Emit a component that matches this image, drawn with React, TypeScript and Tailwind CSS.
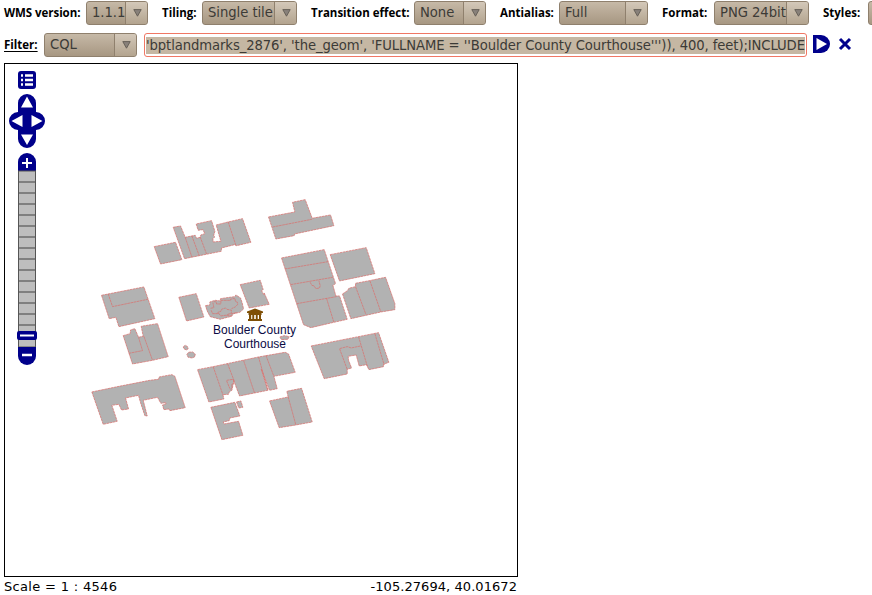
import React from 'react';

function Arrow() {
  return (
    <svg width="9" height="8" viewBox="0 0 9 8" className="block">
      <path d="M.8 .6H8.2L4.5 7.2Z" fill="#88817a" stroke="#615a52" strokeWidth="0.9" />
    </svg>
  );
}

function Select({ text, className }: { text: string; className: string }) {
  return (
    <div
      className={`flex h-[24px] shrink-0 overflow-hidden rounded-[3px] border border-[#8f806d] bg-gradient-to-b from-[#c6b9a7] to-[#a79782] ${className}`}
    >
      <div className="flex-1 pl-[5px] font-['DejaVu_Sans_Condensed','DejaVu_Sans',sans-serif] text-[14.67px] leading-[20px] tracking-[-0.05px] whitespace-nowrap text-[#3c3b37] [font-stretch:condensed]">
        {text}
      </div>
      <div className="flex w-[22px] shrink-0 items-center justify-center border-l border-[#8f806d] bg-gradient-to-b from-[#d3c8b9] to-[#b3a48f] pl-px">
        <Arrow />
      </div>
    </div>
  );
}

function Label({ text, className }: { text: string; className: string }) {
  return (
    <span
      className={`shrink-0 font-['Open_Sans','Noto_Sans',sans-serif] text-[11.5px] leading-[24px] font-bold whitespace-nowrap text-black ${className}`}
    >
      {text}
    </span>
  );
}

const northWest = [
  'M27 169L91 156L110 208L46 221Z',
  'M84 111L106 107L120 141L150 135L154 144L165 141L167 134L179 130L173 118L159 120L153 101L199 91L209 123L205 137L209 140L203 144L204 155L227 153L213 104L249 95L292 85L317 156L274 166L268 163L229 173L228 183L118 205Z',
  'M120 141L140 200M140 137L162 196M165 140L184 191M249 95L272 165',
  'M370 80L449 65L442 36L480 28L501 84L556 74L566 106L448 131L447 136L392 146Z',
  'M383 110L500 87',
];

const east = [
  'M34 53L162 28L196 130L188 135L197 167L208 167L231 237L191 246L122 262L100 253Z',
  'M44 86L174 64M61 133L188 111M80 190L199 169M169 174L191 246M120 126L125 135L132 137L137 145L148 143L150 136L146 121',
  'M180 43L288 22L314 100L208 122Z',
  'M217 161L232 151L236 144L256 139V129L298 121L346 111L374 190V208L332 215L242 235Z',
  'M256 139L287 222M299 121L332 215',
  'M123 317L265 289L325 277L356 366L340 372V379L296 388L289 373L267 377L258 344L234 348L235 360L244 383L231 387V401L162 415Z',
  'M231 387L208 325L231 319L243 323L271 317M265 289L292 380M314 280L342 374',
];

const west = [
  'M49 60L176 35L209 130L101 154L92 126L72 130Z',
  'M69 56L82 94L188 72',
  'M114 181L135 175L136 164L149 160L160 186L174 183L168 153L217 145L249 244L202 255L142 266Z',
  'M131 234L172 226L160 186M176 183L202 255',
  'M20 350L102 333L194 315L220 312L222 305L260 298L269 303L300 397L254 406L251 401L236 403L232 389L242 386V382L227 384L217 366L174 375L186 422L179 421L166 382L160 360L121 368L130 401L109 404L101 387L80 390L96 438L54 447Z',
];

const center = [
  'M26 66L78 55L101 125L49 137Z',
  'M210 28L270 15L279 43L274 46L281 58L282 53L297 87L237 98Z',
  'M106 91L119 89V80L135 75L150 77L151 70L179 66L194 64L197 59L211 68L216 83L220 101L209 111L190 115L184 123L164 128L150 132L120 124L111 107Z',
  'M121 99L131 97L128 82M131 79L139 80V86H152V75H181V72L194 69L196 79L202 81V88L195 95L184 100M123 105L127 115H146L152 122L172 119L182 123L184 115L199 112M146 115L143 111L152 108L154 102L166 98L170 102L184 105L183 114L173 117L169 123',
  'M39 215L45 210L52 214L54 220L49 224L42 221Z',
  'M50 238L55 231L67 230L75 236L74 244L66 248L54 246Z',
  'M329 185L342 181L357 184L353 192L334 193Z',
];

const south = [
  'M52 88L99 79L235 50L315 36L325 41L345 96L281 108L291 145L268 150L243 86L263 150L223 158L178 167L161 122L155 150L147 155L145 162L128 163L131 176L86 185Z',
  'M99 79L128 163M142 70L162 122M140 120L159 117L162 127L155 132V143L149 149M139 121L149 145M190 60L223 158M235 50L263 150M257 45L281 108',
  'M92 201L164 186L179 227L149 233L147 241L129 245L132 251L175 243L188 285L125 298Z',
  'M169 185L182 182L188 201L176 203Z',
  'M268 182L324 170L320 153L364 144L396 245L347 254L297 262Z',
  'M324 170L347 254',
];

function Buildings({ shapes, x, y }: { shapes: string[]; x: number; y: number }) {
  return (
    <g transform={`translate(${x + 0.2} ${y + 0.3}) scale(.33333)`}>
      {shapes.map((d) => (
        <path key={d} d={d} fill={d.endsWith('Z') ? '#b2b2b2' : 'none'} stroke="#d67472" strokeWidth="2.3" strokeDasharray="8 1.5" />
      ))}
    </g>
  );
}

function Controls() {
  const ticks = Array.from({ length: 15 }, (_, i) => 182 + i * 11);
  return (
    <g>
      <rect x="18" y="71" width="18" height="18" rx="3" fill="#00008b" />
      <path d="M21 75.5h2M25 75.5h8M21 80h2M25 80h8M21 84.5h2M25 84.5h8" stroke="#fff" strokeWidth="2.3" />
      <path d="M18 103a9 9 0 0 1 18 0v9a9 9 0 0 1 0 18v9a9 9 0 0 1-18 0v-9a9 9 0 0 1 0-18Z" fill="#00008b" />
      <path d="M27 96.5L33 107.5H21ZM27 145L21 134.5H33ZM11.5 121L22.5 115V127ZM42.500 121L31.500 115V127Z" fill="#fff" />
      <path d="M18 171V162a9 9 0 0 1 18 0V171Z" fill="#00008b" />
      <path d="M27 158v10M22 163h10" stroke="#fff" strokeWidth="2" />
      <rect x="18.5" y="171" width="17" height="176" fill="#bebebe" stroke="#555" />
      {ticks.map((y) => (
        <path key={y} d={`M19 ${y}h16`} stroke="#808080" strokeWidth="2" />
      ))}
      <rect x="17" y="331" width="20" height="9" rx="2" fill="#00008b" />
      <path d="M20 335.5h14" stroke="#fff" strokeWidth="2" />
      <path d="M18 347h18v9a9 9 0 0 1-18 0Z" fill="#00008b" />
      <path d="M22 355h10" stroke="#fff" strokeWidth="2.5" />
    </g>
  );
}

function MapView() {
  return (
    <svg width="512" height="512" viewBox="5 64 512 512" className="block">
      <Buildings shapes={northWest} x={145} y={190} />
      <Buildings shapes={east} x={270} y={240} />
      <Buildings shapes={west} x={85} y={275} />
      <Buildings shapes={center} x={170} y={275} />
      <Buildings shapes={south} x={180} y={340} />
      <path
        d="M247 313V311.5L255 308.500L263 311.500V313ZM248.500 313h13v2h-13ZM249 315h2.200v4.500H249ZM252.300 315h1.900v4.500h-1.900ZM255.800 315h1.900v4.500h-1.900ZM259 315h2v4.500h-2ZM248 319h14v2h-14Z"
        fill="#7f4f05"
      />
      <g className="font-['Liberation_Sans',Arial,sans-serif] text-[12px]" fill="#0b0b45">
        <text x="213" y="334" textLength="83">Boulder County</text>
        <text x="224" y="348" textLength="62">Courthouse</text>
      </g>
      <Controls />
    </svg>
  );
}

export default function App() {
  return (
    <div className="h-[595px] w-[872px] overflow-hidden bg-white">
      <div className="flex h-[32px] items-start pt-px pl-1">
        <Label text="WMS version:" className="w-[82px] tracking-[-0.05px]" />
        <Select text="1.1.1" className="mr-[14px] w-[62px]" />
        <Label text="Tiling:" className="w-[40px]" />
        <Select text="Single tile" className="mr-[14px] w-[95px]" />
        <Label text="Transition effect:" className="w-[103px]" />
        <Select text="None" className="mr-[14px] w-[72px]" />
        <Label text="Antialias:" className="w-[59px]" />
        <Select text="Full" className="mr-[14px] w-[89px]" />
        <Label text="Format:" className="w-[52px]" />
        <Select text="PNG 24bit" className="mr-[14px] w-[95px]" />
        <Label text="Styles:" className="w-[45px]" />
        <Select text="" className="w-[95px]" />
      </div>
      <div className="flex h-[31px] items-start pt-px pl-1">
        <Label text="Filter:" className="w-[40px] underline decoration-1 underline-offset-2" />
        <Select text="CQL" className="mr-[7px] w-[93px]" />
        <div className="flex h-[24px] w-[663px] shrink-0 items-center rounded-[3px] border border-[#f07764] px-px">
          <div className="h-[17px] w-[659px] bg-[#c5b7a3] font-['DejaVu_Sans_Condensed','DejaVu_Sans',sans-serif] text-[14.67px] leading-[15px] tracking-[-0.092px] whitespace-nowrap text-[#3c3b37] [font-stretch:condensed]">
            'bptlandmarks_2876', 'the_geom', 'FULLNAME = ''Boulder County Courthouse''')), 400, feet);INCLUDE
          </div>
        </div>
        <svg width="48" height="24" viewBox="0 0 48 24" className="shrink-0">
          <path d="M6 2h8a9 9 0 0 1 0 18H6Z" fill="#00008b" />
          <path d="M9.500 5L20 11L9.500 17Z" fill="#fff" />
          <path d="M33 6L43 16M43 6L33 16" stroke="#00008b" strokeWidth="3" />
        </svg>
      </div>
      <div className="ml-1 h-[514px] w-[514px] border border-black">
        <MapView />
      </div>
      <div className="ml-1 flex h-[18px] w-[513px] justify-between font-['DejaVu_Sans',Verdana,sans-serif] text-[13px] leading-[19px] whitespace-nowrap text-black">
        <span className="tracking-[0.32px]">Scale = 1 : 4546</span>
        <span className="tracking-[0.06px]">-105.27694, 40.01672</span>
      </div>
    </div>
  );
}
